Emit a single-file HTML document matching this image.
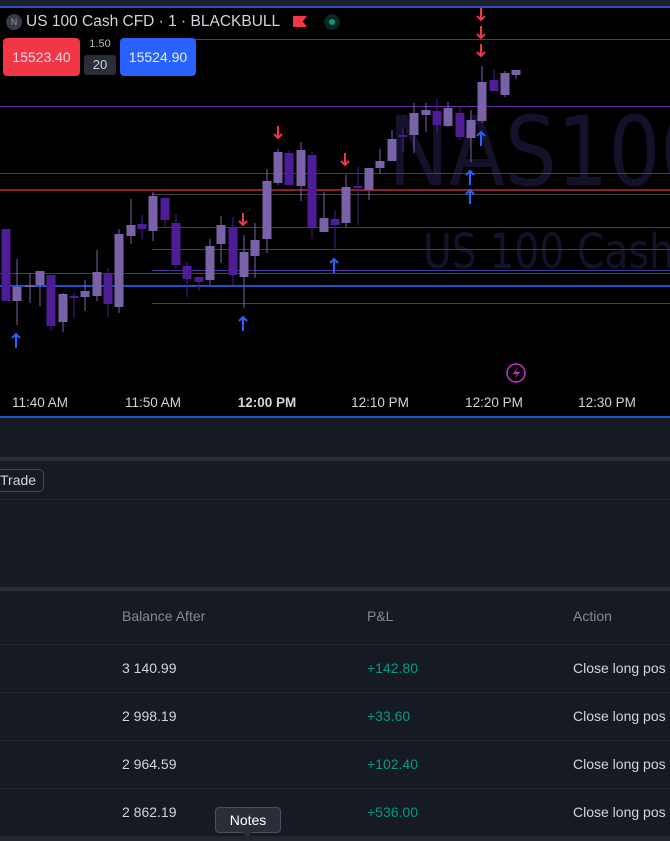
<!DOCTYPE html>
<html><head><meta charset="utf-8"><style>
*{margin:0;padding:0;box-sizing:border-box}
body{width:670px;height:841px;overflow:hidden;background:#161a22;font-family:"Liberation Sans",sans-serif;position:relative}
.a{position:absolute;white-space:nowrap}
</style></head><body>
<div class="a" style="left:0;top:0;width:670px;height:418px;background:#000"></div>
<div class="a" style="left:0;top:0;width:670px;height:6px;background:#1e222d"></div>
<div class="a" style="left:0;top:6px;width:670px;height:2px;background:#2a4fc4"></div>
<svg class="a" style="left:0;top:0" width="670" height="418">
<text x="388" y="185" font-family="DejaVu Sans" font-size="96" fill="#14122a" transform="translate(388,0) scale(0.85,1) translate(-388,0)">NAS100</text>
<text x="423" y="268" font-family="DejaVu Sans" font-size="48" fill="#14122a" transform="translate(423,0) scale(0.82,1) translate(-423,0)">US 100 Cash</text>
<g stroke-width="1">
<line x1="195" y1="39.5" x2="670" y2="39.5" stroke="#5b2fa0"/>
<line x1="0" y1="106.5" x2="670" y2="106.5" stroke="#6a2aa8"/>
<line x1="0" y1="173.5" x2="670" y2="173.5" stroke="#4e2f8c"/>
<line x1="0" y1="190" x2="670" y2="190" stroke="#8a2030" stroke-width="2"/>
<line x1="152" y1="194.5" x2="670" y2="194.5" stroke="#444"/>
<line x1="152" y1="227.5" x2="670" y2="227.5" stroke="#4e2f8c"/>
<line x1="152" y1="249.5" x2="670" y2="249.5" stroke="#5a2a8a"/>
<line x1="152" y1="270.5" x2="670" y2="270.5" stroke="#4e2fa0"/>
<line x1="0" y1="273.5" x2="670" y2="273.5" stroke="#444"/>
<line x1="0" y1="286" x2="670" y2="286" stroke="#2350c8" stroke-width="2"/>
<line x1="152" y1="303.5" x2="670" y2="303.5" stroke="#444"/>
</g>
<g id="c"></g>
<g fill="none" stroke="#f23645" stroke-width="2">
<path d="M278 126v12M274 134l4 4 4-4"/><path d="M345 153v12M341 161l4 4 4-4"/><path d="M243 213v12M239 221l4 4 4-4"/>
<path d="M481 8v12M477 16l4 4 4-4"/><path d="M481 26v12M477 34l4 4 4-4"/><path d="M481 44v12M477 52l4 4 4-4"/>
</g>
<g fill="none" stroke="#2962ff" stroke-width="2">
<path d="M16 348v-12M12 338l4-4 4 4"/><path d="M243 331v-12M239 321l4-4 4 4"/><path d="M334 273v-12M330 263l4-4 4 4"/>
<path d="M470 185v-12M466 175l4-4 4 4"/><path d="M470 204v-12M466 194l4-4 4 4"/><path d="M481 146v-12M477 136l4-4 4 4"/>
</g>
<circle cx="516" cy="373" r="9" fill="none" stroke="#c531c5" stroke-width="1.5"/>
<path d="M518 367l-5 7h4l-2 5 5-7h-4z" fill="#c531c5"/>
<g font-size="13.5" fill="#d1d4dc" text-anchor="middle">
<text x="40" y="407">11:40 AM</text><text x="153" y="407">11:50 AM</text><text x="267" y="407" font-weight="bold">12:00 PM</text><text x="380" y="407">12:10 PM</text><text x="494" y="407">12:20 PM</text><text x="607" y="407">12:30 PM</text>
</g>
</svg>
<div class="a" style="left:0;top:416px;width:670px;height:2px;background:#2350c8"></div>
<div class="a" style="left:6px;top:14px;width:16px;height:16px;border-radius:50%;background:#363a45;color:#9598a1;font-size:9px;text-align:center;line-height:16px">N</div>
<div class="a" style="left:26px;top:13px;font-size:15.5px;color:#d1d4dc">US 100 Cash CFD · 1 · BLACKBULL</div>
<div class="a" style="left:293px;top:16px;width:14px;height:11px;background:#f23645;clip-path:polygon(0 0,100% 0,70% 50%,100% 100%,0 100%)"></div>
<div class="a" style="left:324px;top:14px;width:16px;height:16px;border-radius:50%;background:#0d2620"></div>
<div class="a" style="left:329px;top:19px;width:6px;height:6px;border-radius:50%;background:#089981"></div>
<div class="a" style="left:3px;top:38px;width:77px;height:38px;background:#f23645;border-radius:4px;color:#fde;font-size:14px;text-align:center;line-height:38px">15523.40</div>
<div class="a" style="left:84px;top:38px;width:32px;text-align:center;font-size:11px;color:#b2b5be">1.50</div>
<div class="a" style="left:84px;top:55px;width:32px;height:20px;background:#2a2e39;border-radius:3px;text-align:center;font-size:13px;line-height:20px;color:#d1d4dc">20</div>
<div class="a" style="left:120px;top:38px;width:76px;height:38px;background:#2962ff;border-radius:4px;color:#e6ecff;font-size:14px;text-align:center;line-height:38px">15524.90</div>

<div class="a" style="left:0;top:457px;width:670px;height:4px;background:#2a2e39"></div>
<div class="a" style="left:-10px;top:469px;width:54px;height:23px;border:1px solid #434651;border-radius:5px;color:#d1d4dc;font-size:14px;line-height:21px;padding-left:9px">Trade</div>
<div class="a" style="left:0;top:499px;width:670px;height:1px;background:#262a33"></div>
<div class="a" style="left:0;top:587px;width:670px;height:4px;background:#2a2e39"></div>
<div class="a" style="left:122px;top:608px;font-size:14px;color:#868993">Balance After</div>
<div class="a" style="left:367px;top:608px;font-size:14px;color:#868993">P&amp;L</div>
<div class="a" style="left:573px;top:608px;font-size:14px;color:#868993">Action</div>
<div class="a" style="left:0;top:644px;width:670px;height:1px;background:#262a33"></div>
<div class="a" style="left:0;top:692px;width:670px;height:1px;background:#262a33"></div>
<div class="a" style="left:0;top:740px;width:670px;height:1px;background:#262a33"></div>
<div class="a" style="left:0;top:788px;width:670px;height:1px;background:#262a33"></div>
<div class="a" style="left:0;top:836px;width:670px;height:5px;background:#22262f"></div>
<div class="a" style="left:122px;top:660px;font-size:14px;color:#d1d4dc">3 140.99</div>
<div class="a" style="left:367px;top:660px;font-size:14px;color:#089981">+142.80</div>
<div class="a" style="left:573px;top:660px;font-size:14px;color:#d1d4dc">Close long pos</div>
<div class="a" style="left:122px;top:708px;font-size:14px;color:#d1d4dc">2 998.19</div>
<div class="a" style="left:367px;top:708px;font-size:14px;color:#089981">+33.60</div>
<div class="a" style="left:573px;top:708px;font-size:14px;color:#d1d4dc">Close long pos</div>
<div class="a" style="left:122px;top:756px;font-size:14px;color:#d1d4dc">2 964.59</div>
<div class="a" style="left:367px;top:756px;font-size:14px;color:#089981">+102.40</div>
<div class="a" style="left:573px;top:756px;font-size:14px;color:#d1d4dc">Close long pos</div>
<div class="a" style="left:122px;top:804px;font-size:14px;color:#d1d4dc">2 862.19</div>
<div class="a" style="left:367px;top:804px;font-size:14px;color:#089981">+536.00</div>
<div class="a" style="left:573px;top:804px;font-size:14px;color:#d1d4dc">Close long pos</div>
<div class="a" style="left:215px;top:807px;width:66px;height:26px;background:#2a2e39;border:1px solid #4a4e59;border-radius:4px;color:#fff;font-size:14px;text-align:center;line-height:24px">Notes</div>
<div class="a" style="left:242px;top:832px;width:0;height:0;border-left:5px solid transparent;border-right:5px solid transparent;border-top:6px solid #2a2e39"></div>
<script>
var L="#7a62a8",D="#4c1d95";
var c=[[6,D,229,301,229,301],[17,L,287,301,259,325],[30,L,285,287,273,303],[40,L,271,285,271,306],[51,D,275,326,275,331],[63,L,294,322,293,332],[74,D,296,298,293,318],[85,L,291,297,280,311],[97,L,272,296,250,301],[108,D,273,304,268,318],[119,L,234,307,229,313],[131,L,225,236,199,244],[142,D,224,229,215,239],[153,L,196,231,192,241],[165,D,198,220,198,227],[176,D,223,265,214,268],[187,D,266,279,262,297],[199,D,277,282,277,291],[210,L,246,280,239,285],[221,L,225,244,216,263],[233,D,227,275,217,285],[244,L,252,277,235,308],[255,L,240,256,223,278],[267,L,181,239,169,253],[278,L,152,183,149,185],[289,D,153,185,151,185],[301,L,150,186,142,201],[312,D,155,227,152,239],[324,L,218,232,192,232],[335,D,219,225,210,251],[346,L,187,223,175,227],[358,D,186,188,167,225],[369,L,168,190,168,200],[380,L,161,168,149,174],[392,L,139,161,130,161],[403,D,135,137,127,152],[414,L,113,135,103,153],[426,L,110,115,103,132],[437,D,111,125,99,132],[448,L,108,126,102,127],[460,D,113,137,106,140],[471,L,120,138,110,162],[482,L,82,121,66,123],[494,D,80,91,69,91],[505,L,73,95,71,97],[516,L,70,75,70,79]];
var s="";c.forEach(function(k){s+='<line x1="'+k[0]+'" x2="'+k[0]+'" y1="'+k[4]+'" y2="'+k[5]+'" stroke="'+k[1]+'"/><rect x="'+(k[0]-4.5)+'" y="'+k[2]+'" width="9" height="'+Math.max(2,k[3]-k[2])+'" fill="'+k[1]+'"/>';});
document.getElementById("c").innerHTML=s;
</script>
</body></html>
